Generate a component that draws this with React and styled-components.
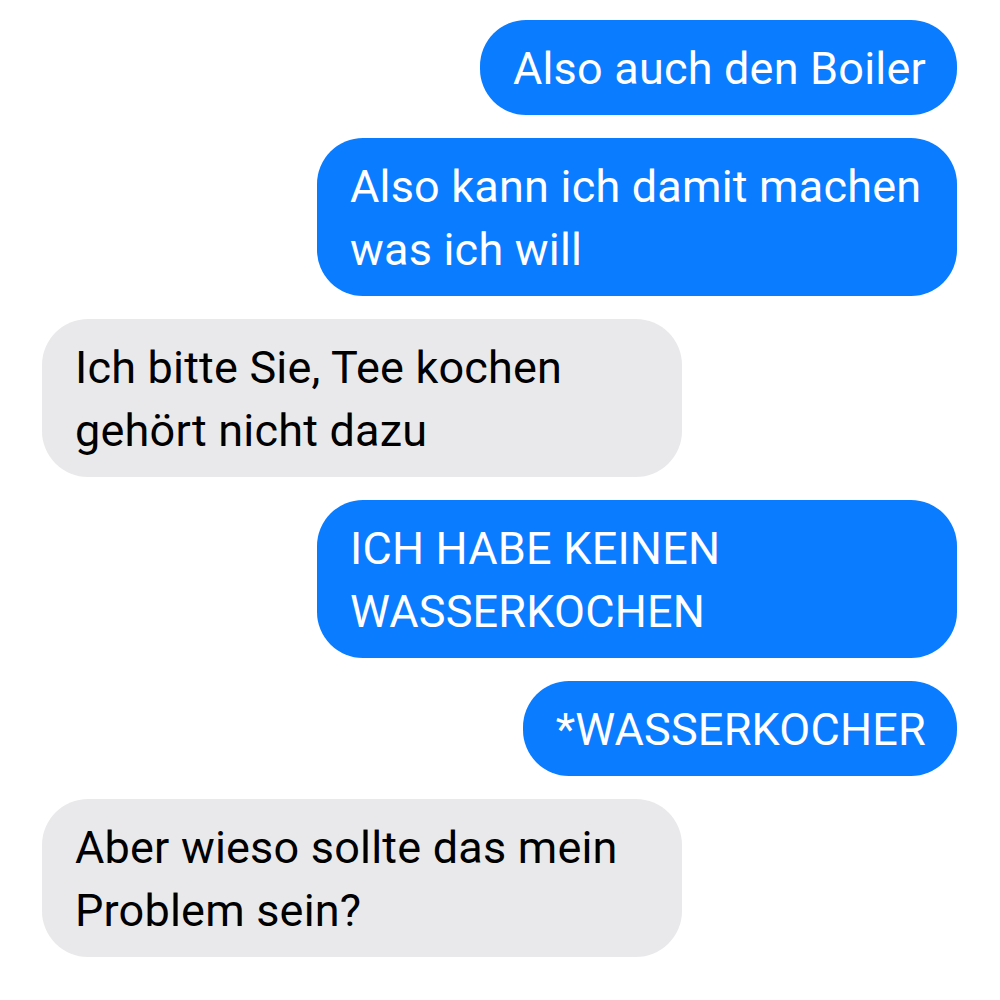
import React from 'react';
import styled, { createGlobalStyle } from 'styled-components';

const colors = {
  blue: '#0a7cff',
  gray: '#e9e9eb',
  white: '#ffffff',
  black: '#000000'
};

const GlobalStyle = createGlobalStyle`
  body {
    margin: 0;
    background: ${colors.white};
    font-family: Roboto, 'Noto Sans', sans-serif;
  }
`;

const Thread = styled.div`
  display: flex;
  flex-direction: column;
  gap: 23px;
  padding: 20px 43px 0 42px;
`;

const Bubble = styled.div`
  max-width: 640px;
  box-sizing: border-box;
  padding: 17px 31px 15px 33px;
  border-radius: 46px;
  font-size: 45px;
  line-height: 63px;
  letter-spacing: 0.2px;
  background-color: ${props => props.isUser ? colors.blue : colors.gray};
  color: ${props => props.isUser ? colors.white : colors.black};
  align-self: ${props => props.isUser ? 'flex-end' : 'flex-start'};
`;

const messages = [
  { id: 1, sender: 'user', content: 'Also auch den Boiler' },
  { id: 2, sender: 'user', content: 'Also kann ich damit machen was ich will' },
  { id: 3, sender: 'other', content: 'Ich bitte Sie, Tee kochen gehört nicht dazu' },
  { id: 4, sender: 'user', content: 'ICH HABE KEINEN WASSERKOCHEN' },
  { id: 5, sender: 'user', content: '*WASSERKOCHER' },
  { id: 6, sender: 'other', content: 'Aber wieso sollte das mein Problem sein?' }
];

export default function App() {
  return (
    <>
      <GlobalStyle />
      <Thread>
        {messages.map(msg => (
          <Bubble key={msg.id} isUser={msg.sender === 'user'}>
            {msg.content}
          </Bubble>
        ))}
      </Thread>
    </>
  );
}
